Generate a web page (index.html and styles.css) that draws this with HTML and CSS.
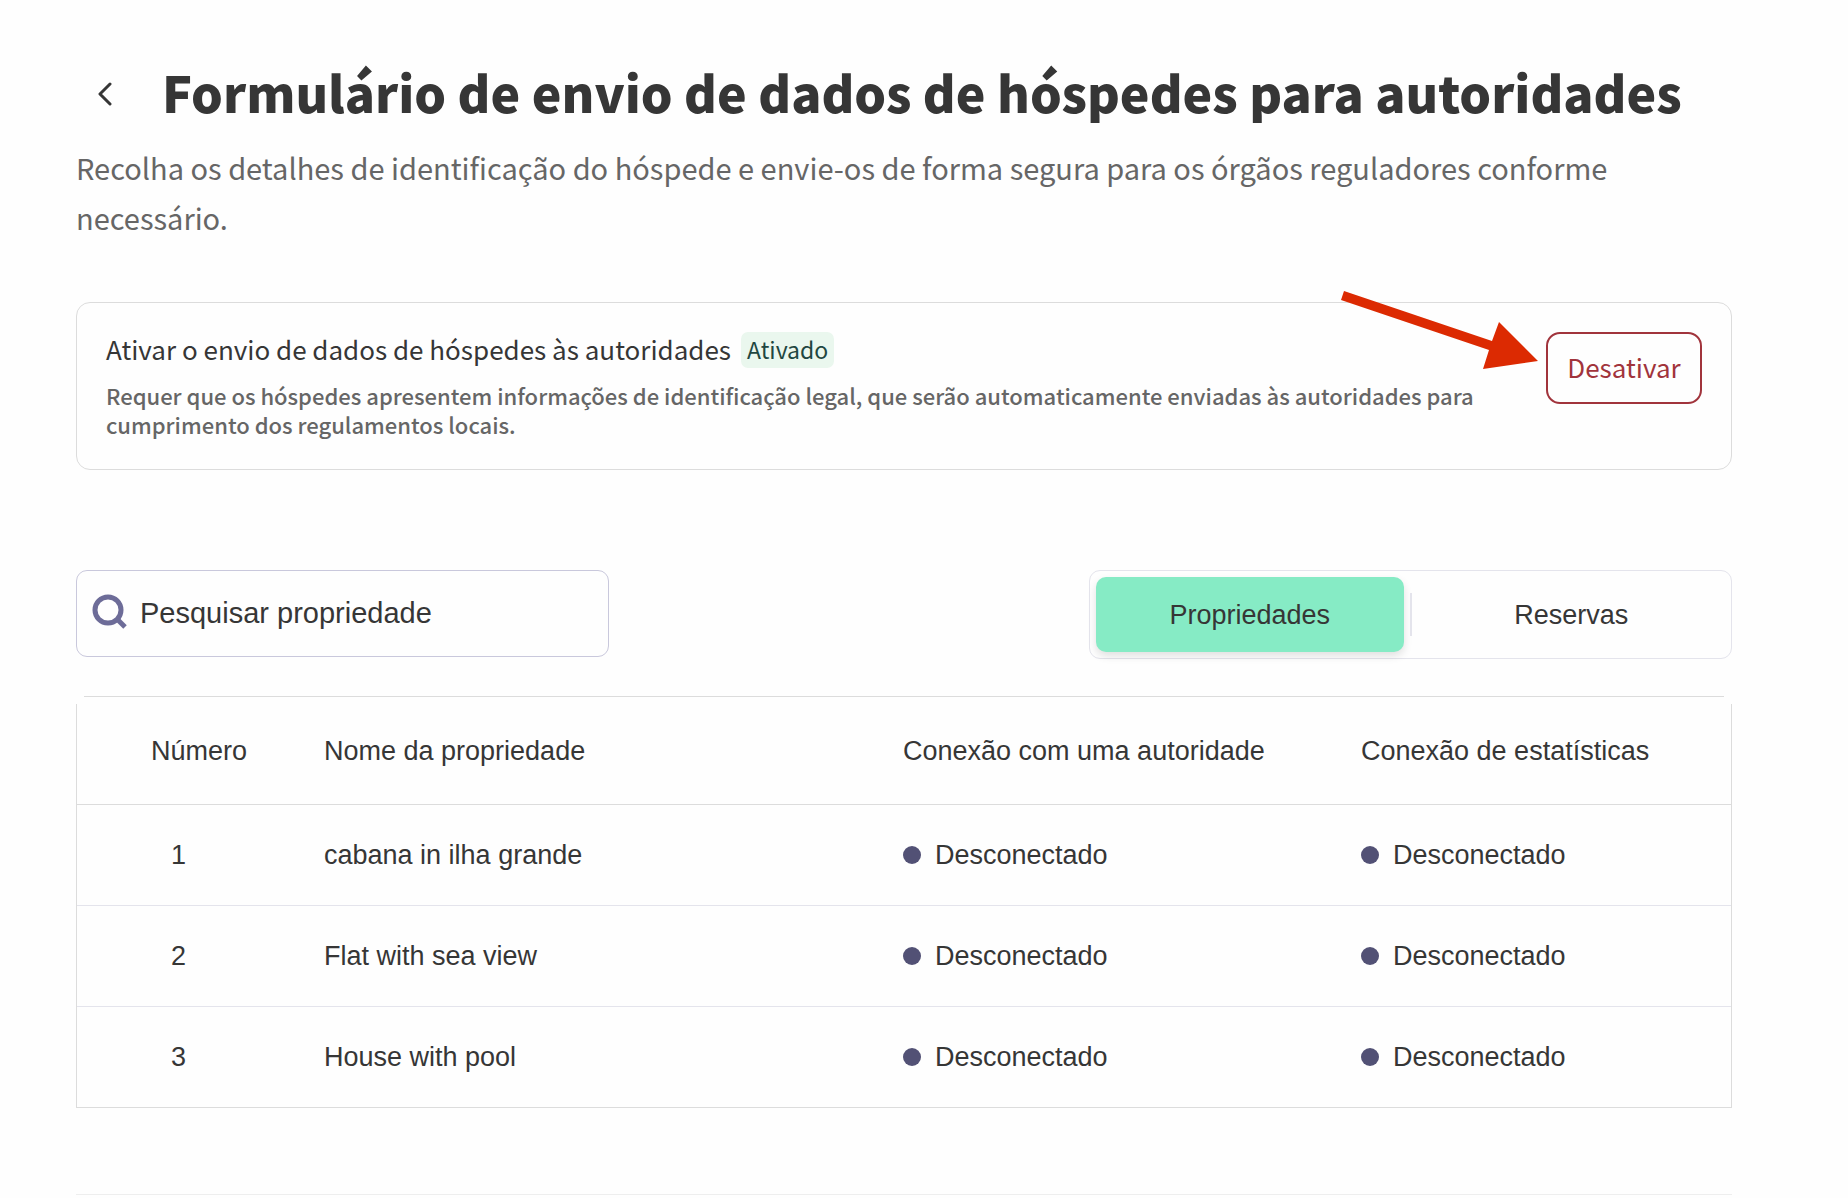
FILE: index.html
```html
<!DOCTYPE html>
<html lang="pt">
<head>
    <meta charset="UTF-8">
    <meta name="viewport" content="width=device-width, initial-scale=1.0">
    <title>Formulário de envio de dados de hóspedes</title>
    <link rel="stylesheet" href="styles.css">
</head>
<body>

<main class="page">
    <header class="page-header">
        <div class="title-row">
            <a href="#" class="back" aria-label="Voltar">
                <svg width="16" height="30" viewBox="0 0 16 30" fill="none" stroke="#363636" stroke-width="3" stroke-linecap="round" stroke-linejoin="round">
                    <path d="M14 8 4 18l10 10"/>
                </svg>
            </a>
            <h1>Formulário de envio de dados de hóspedes para autoridades</h1>
        </div>
        <p class="subtitle">Recolha os detalhes de identificação do hóspede e envie-os de forma segura para os órgãos reguladores conforme necessário.</p>
    </header>

    <section class="card">
        <div class="card-text">
            <div class="card-title">
                <h2>Ativar o envio de dados de hóspedes às autoridades</h2>
                <span class="badge">Ativado</span>
            </div>
            <p>Requer que os hóspedes apresentem informações de identificação legal, que serão automaticamente enviadas às autoridades para cumprimento dos regulamentos locais.</p>
        </div>
        <button type="button" class="btn-disable">Desativar</button>
        <svg class="arrow" width="200" height="82" viewBox="0 0 200 82" aria-hidden="true">
            <path fill="#dc2a02" d="M4 1 152 51l7-19 39 39-55 8 6-19L1 10z"/>
        </svg>
    </section>

    <div class="toolbar">
        <label class="search">
            <svg width="36" height="40" viewBox="0 0 36 40" fill="none" stroke="#6d6c98" stroke-width="5">
                <circle cx="16" cy="16" r="13"/>
                <path d="m25 25 8 8"/>
            </svg>
            <input type="text" placeholder="Pesquisar propriedade" aria-label="Pesquisar propriedade">
        </label>
        <div class="tabs">
            <button type="button" class="tab active">Propriedades</button>
            <span class="divider"></span>
            <button type="button" class="tab">Reservas</button>
        </div>
    </div>

    <div class="table-wrap">
        <table>
            <thead>
                <tr>
                    <th class="col-number">Número</th>
                    <th>Nome da propriedade</th>
                    <th class="col-authority">Conexão com uma autoridade</th>
                    <th class="col-stats">Conexão de estatísticas</th>
                </tr>
            </thead>
            <tbody>
                <tr>
                    <td class="number">1</td>
                    <td>cabana in ilha grande</td>
                    <td><span class="status">Desconectado</span></td>
                    <td><span class="status">Desconectado</span></td>
                </tr>
                <tr>
                    <td class="number">2</td>
                    <td>Flat with sea view</td>
                    <td><span class="status">Desconectado</span></td>
                    <td><span class="status">Desconectado</span></td>
                </tr>
                <tr>
                    <td class="number">3</td>
                    <td>House with pool</td>
                    <td><span class="status">Desconectado</span></td>
                    <td><span class="status">Desconectado</span></td>
                </tr>
            </tbody>
        </table>
    </div>

    <hr>
</main>

</body>
</html>
```
FILE: styles.css
```css
:root {
    --text: #363636;
    --muted: #666;
    --line: #dcdcdc;
    --line-soft: #e4e4ec;
    --red: #a1343c;
    --sans: "Noto Sans CJK SC", "Noto Sans", sans-serif;
    --ui: "Liberation Sans", Arial, sans-serif;
}

* {
    box-sizing: border-box;
}

body {
    margin: 0;
    background: #fefefe;
    color: var(--text);
    font-family: var(--ui);
}

h1, h2, p {
    margin: 0;
}

.page {
    padding: 53px 116px 0 76px;
}

/* header */
.title-row {
    display: flex;
    align-items: center;
    gap: 50px;
    padding-left: 20px;
}

.back {
    display: flex;
}

h1 {
    font: 900 50px/76px var(--sans);
    white-space: nowrap;
}

.subtitle {
    margin-top: 13px;
    color: var(--muted);
    font: 29px/50px var(--sans);
}

/* activation card */
.card {
    position: relative;
    display: flex;
    align-items: flex-start;
    justify-content: space-between;
    gap: 60px;
    margin-top: 60px;
    padding: 29px 29px 30px;
    border: 1px solid var(--line);
    border-radius: 14px;
}

.card-title {
    display: flex;
    align-items: center;
    gap: 10px;
}

h2 {
    padding-bottom: 2px;
    font: 26px/34px var(--sans);
}

.badge {
    padding: 0 6px 2px;
    border-radius: 7px;
    background: #eaf7ee;
    color: #1f4741;
    font: 23px/34px var(--sans);
}

.card-text p {
    margin-top: 13px;
    color: var(--muted);
    font: 500 22px/29px var(--sans);
}

.btn-disable {
    flex: none;
    width: 156px;
    height: 72px;
    padding: 0 0 2px;
    border: 2px solid var(--red);
    border-radius: 14px;
    background: none;
    color: var(--red);
    font: 26px/34px var(--sans);
}

/* pointer over the card */
.arrow {
    position: absolute;
    top: -13px;
    right: 191px;
}

/* search + tabs */
.toolbar {
    display: flex;
    justify-content: space-between;
    margin-top: 100px;
}

.search {
    display: flex;
    align-items: center;
    gap: 12px;
    width: 533px;
    height: 87px;
    padding: 0 15px;
    border: 1px solid #c9c8dc;
    border-radius: 11px;
}

.search input {
    flex: 1;
    min-width: 0;
    padding: 0 0 2px;
    border: 0;
    outline: 0;
    background: none;
    font: 29px/36px var(--ui);
}

.search input::placeholder {
    color: var(--text);
    opacity: 1;
}

.tabs {
    display: flex;
    align-items: center;
    gap: 6px;
    width: 643px;
    height: 89px;
    padding: 6px;
    border: 1px solid var(--line-soft);
    border-radius: 11px;
}

.tab {
    flex: 1;
    height: 75px;
    padding: 0;
    border: 0;
    border-radius: 10px;
    background: none;
    color: var(--text);
    font: 27px/36px var(--ui);
}

.tab.active {
    background: #86ebc5;
    box-shadow: 0 4px 8px rgba(0, 0, 0, 0.12);
}

.divider {
    width: 2px;
    height: 43px;
    background: var(--line-soft);
}

/* properties table */
.table-wrap {
    position: relative;
    margin-top: 37px;
    border: 1px solid var(--line);
}

.table-wrap::before,
.table-wrap::after {
    content: "";
    position: absolute;
    top: -1px;
    left: -1px;
    width: 8px;
    height: 8px;
    background: #fefefe;
}

.table-wrap::after {
    left: auto;
    right: -1px;
}

table {
    width: 100%;
    border-collapse: collapse;
    table-layout: fixed;
}

th, td {
    height: 101px;
    padding: 0;
    border-top: 1px solid var(--line-soft);
    font: 27px/36px var(--ui);
    text-align: left;
}

th {
    height: 107px;
    padding-top: 2px;
    border-top: 0;
    border-bottom: 1px solid var(--line);
}

.col-number {
    width: 247px;
    padding-left: 74px;
}

.col-authority {
    width: 458px;
}

.col-stats {
    width: 370px;
}

.number {
    padding-left: 94px;
}

.status {
    display: flex;
    align-items: center;
    gap: 14px;
}

.status::before {
    content: "";
    width: 18px;
    height: 18px;
    border-radius: 50%;
    background: #525175;
}

hr {
    margin: 86px 0 0;
    border: 0;
    border-top: 1px solid #eee;
}
```
